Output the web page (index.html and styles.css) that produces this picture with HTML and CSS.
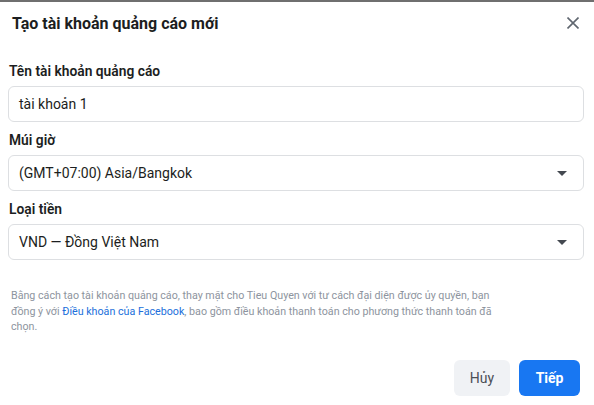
FILE: index.html
```html
<!DOCTYPE html>
<html lang="vi">
<head>
    <meta charset="UTF-8">
    <meta name="viewport" content="width=device-width, initial-scale=1.0">
    <title>Tạo tài khoản quảng cáo mới</title>
    <link rel="stylesheet" href="styles.css">
</head>
<body>
    <div class="topline"></div>
    <div class="dialog">
        <div class="header">
            <h1>Tạo tài khoản quảng cáo mới</h1>
            <button class="close" type="button" aria-label="Đóng">
                <svg width="12" height="12" viewBox="0 0 12 12">
                    <path d="M0.5 0.5 L11.5 11.5 M11.5 0.5 L0.5 11.5" stroke="#606770" stroke-width="1.6" fill="none"/>
                </svg>
            </button>
        </div>

        <form class="form">
            <label class="label">Tên tài khoản quảng cáo</label>
            <div class="box">tài khoản 1</div>

            <label class="label">Múi giờ</label>
            <div class="box select">
                <span>(GMT+07:00) Asia/Bangkok</span>
                <span class="caret"></span>
            </div>

            <label class="label">Loại tiền</label>
            <div class="box select">
                <span>VND — Đồng Việt Nam</span>
                <span class="caret"></span>
            </div>

            <p class="terms">Bằng cách tạo tài khoản quảng cáo, thay mặt cho Tieu Quyen với tư cách đại diện được ủy quyền, bạn đồng ý với <a href="#">Điều khoản của Facebook</a>, bao gồm điều khoản thanh toán cho phương thức thanh toán đã chọn.</p>

            <div class="actions">
                <button type="button" class="btn btn-cancel">Hủy</button>
                <button type="submit" class="btn btn-next">Tiếp</button>
            </div>
        </form>
    </div>
</body>
</html>
```

FILE: styles.css
```css
body {
    font-family: Roboto, "Noto Sans", Arial, sans-serif;
    background-color: #fff;
    color: #1c1e21;
    margin: 0;
    padding: 0;
}
.topline {
    height: 2px;
    background-color: #6f6f6f;
}
.header {
    display: flex;
    justify-content: space-between;
    align-items: center;
    height: 42px;
    padding: 0 15px 0 12px;
}
h1 {
    margin: 0;
    font-size: 16px;
    font-weight: bold;
    color: #1c1e21;
}
.close {
    border: none;
    background: none;
    padding: 0;
    width: 12px;
    height: 12px;
    display: flex;
    cursor: pointer;
}
.form {
    display: flex;
    flex-direction: column;
    padding: 18px 10px 0 8px;
}
.label {
    display: block;
    font-size: 13.8px;
    font-weight: 600;
    line-height: 18px;
    margin-bottom: 6px;
    padding-left: 1px;
}
.box {
    box-sizing: border-box;
    height: 36px;
    border: 1px solid #dddfe2;
    border-radius: 6px;
    padding: 0 12px 0 10px;
    font-size: 14px;
    display: flex;
    align-items: center;
    margin-bottom: 9px;
}
.select {
    justify-content: space-between;
}
.caret {
    width: 0;
    height: 0;
    border-left: 5px solid transparent;
    border-right: 5px solid transparent;
    border-top: 5px solid #444950;
    margin-right: 4px;
}
.terms {
    font-size: 10.7px;
    line-height: 15.5px;
    color: #8d949e;
    margin: 19px 0 0 3px;
    max-width: 488px;
}
.terms a {
    color: #216fdb;
    text-decoration: none;
}
.actions {
    display: flex;
    justify-content: flex-end;
    gap: 9px;
    margin-top: 25px;
    padding-right: 4px;
}
.btn {
    height: 36px;
    border: none;
    border-radius: 6px;
    padding: 0 16px;
    font-family: inherit;
    font-size: 14px;
    cursor: pointer;
}
.btn-cancel {
    background-color: #f0f2f5;
    color: #4b4f56;
}
.btn-next {
    background-color: #1877f2;
    color: #fff;
    font-weight: bold;
    padding: 0 16.5px;
}
```
